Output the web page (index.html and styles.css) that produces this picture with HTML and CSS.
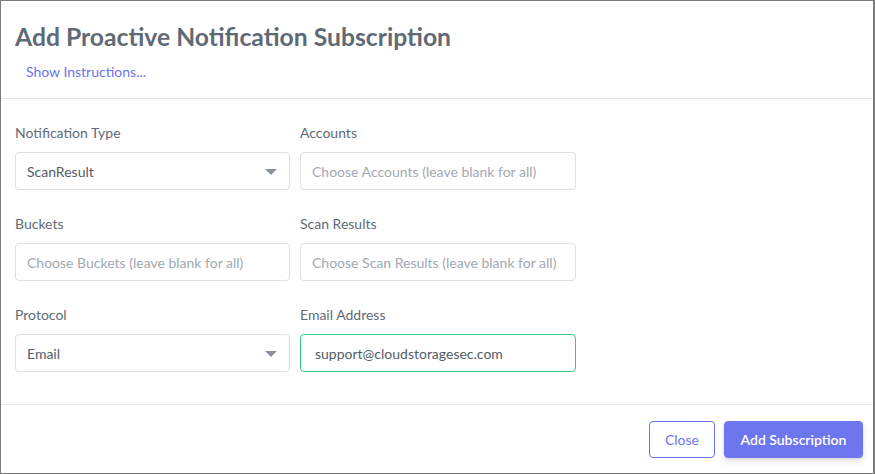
FILE: index.html
```html
<!DOCTYPE html>
<html>
<head>
<meta charset="utf-8">
<link rel="stylesheet" href="styles.css">
</head>
<body>
<div class="modal">
  <div class="modal-header">
    <h1 class="title">Add Proactive Notification Subscription</h1>
    <a class="link" href="#">Show Instructions...</a>
  </div>
  <div class="modal-body">
    <div class="grid">
      <div class="field">
        <label class="label">Notification Type</label>
        <div class="control select">
          <span class="value">ScanResult</span>
          <span class="caret"></span>
        </div>
      </div>
      <div class="field">
        <label class="label">Accounts</label>
        <div class="control"><span class="placeholder">Choose Accounts (leave blank for all)</span></div>
      </div>
      <div class="field">
        <label class="label">Buckets</label>
        <div class="control"><span class="placeholder">Choose Buckets (leave blank for all)</span></div>
      </div>
      <div class="field">
        <label class="label">Scan Results</label>
        <div class="control"><span class="placeholder">Choose Scan Results (leave blank for all)</span></div>
      </div>
      <div class="field">
        <label class="label">Protocol</label>
        <div class="control select">
          <span class="value">Email</span>
          <span class="caret"></span>
        </div>
      </div>
      <div class="field">
        <label class="label">Email Address</label>
        <div class="control focused"><span class="value indent">support@cloudstoragesec.com</span></div>
      </div>
    </div>
  </div>
  <div class="modal-footer">
    <button class="btn btn-outline">Close</button>
    <button class="btn btn-primary">Add Subscription</button>
  </div>
</div>
</body>
</html>
```
FILE: styles.css
```css
* { box-sizing: border-box; }
html, body { margin: 0; padding: 0; background: #fff; }
body { font-family: "Lato", "Open Sans", sans-serif; }
.modal {
  width: 875px;
  height: 474px;
  border: 1px solid #7a7a7a;
  border-right-width: 2px;
  display: flex;
  flex-direction: column;
  background: #fff;
}
.modal-header {
  padding: 18px 14px 0 14px;
  height: 98px;
  flex: none;
  border-bottom: 1px solid #e3e3ea;
}
.title {
  margin: 0;
  font-size: 24.7px;
  line-height: 36px;
  font-weight: 700;
  color: #5f6a76;
}
.link {
  display: inline-block;
  margin: 7px 0 0 11px;
  font-size: 14px;
  line-height: 20px;
  color: #6b74f0;
  text-decoration: none;
}
.modal-body {
  flex: 1;
  padding: 24px 14px 0 14px;
  border-bottom: 1px solid #e9e9ee;
}
.grid {
  display: grid;
  grid-template-columns: 275px 276px;
  column-gap: 10px;
  row-gap: 24px;
}
.field { display: flex; flex-direction: column; }
.label {
  font-size: 14px;
  line-height: 20px;
  color: #5f6a76;
  margin-bottom: 9px;
}
.control {
  height: 38px;
  border: 1px solid #dcdfe4;
  border-radius: 4px;
  display: flex;
  align-items: center;
  padding: 0 11px;
  font-size: 14px;
  position: relative;
}
.value { color: #525c68; }
.value.indent { padding-left: 3px; }
.placeholder { color: #a3a9b0; }
.focused { border-color: #2dce89; }
.caret {
  position: absolute;
  right: 12px;
  top: 16px;
  width: 0; height: 0;
  border-left: 6px solid transparent;
  border-right: 6px solid transparent;
  border-top: 6px solid #8a939d;
}
.modal-footer {
  height: 68px;
  flex: none;
  display: flex;
  justify-content: flex-end;
  align-items: flex-start;
  padding: 16px 10px 0 0;
  gap: 9px;
}
.btn {
  height: 37px;
  font-family: inherit;
  font-size: 14px;
  font-weight: 600;
  border-radius: 4px;
  padding: 0 14px;
  cursor: pointer;
}
.btn-outline {
  width: 66px;
  background: #fff;
  border: 1px solid #6b74f0;
  color: #6b74f0;
  font-weight: 400;
}
.btn-primary {
  width: 139px;
  background: #6e76ef;
  border: 1px solid #6e76ef;
  color: #fff;
  box-shadow: 0 4px 6px rgba(50,50,93,.11), 0 1px 3px rgba(0,0,0,.08);
}
```
